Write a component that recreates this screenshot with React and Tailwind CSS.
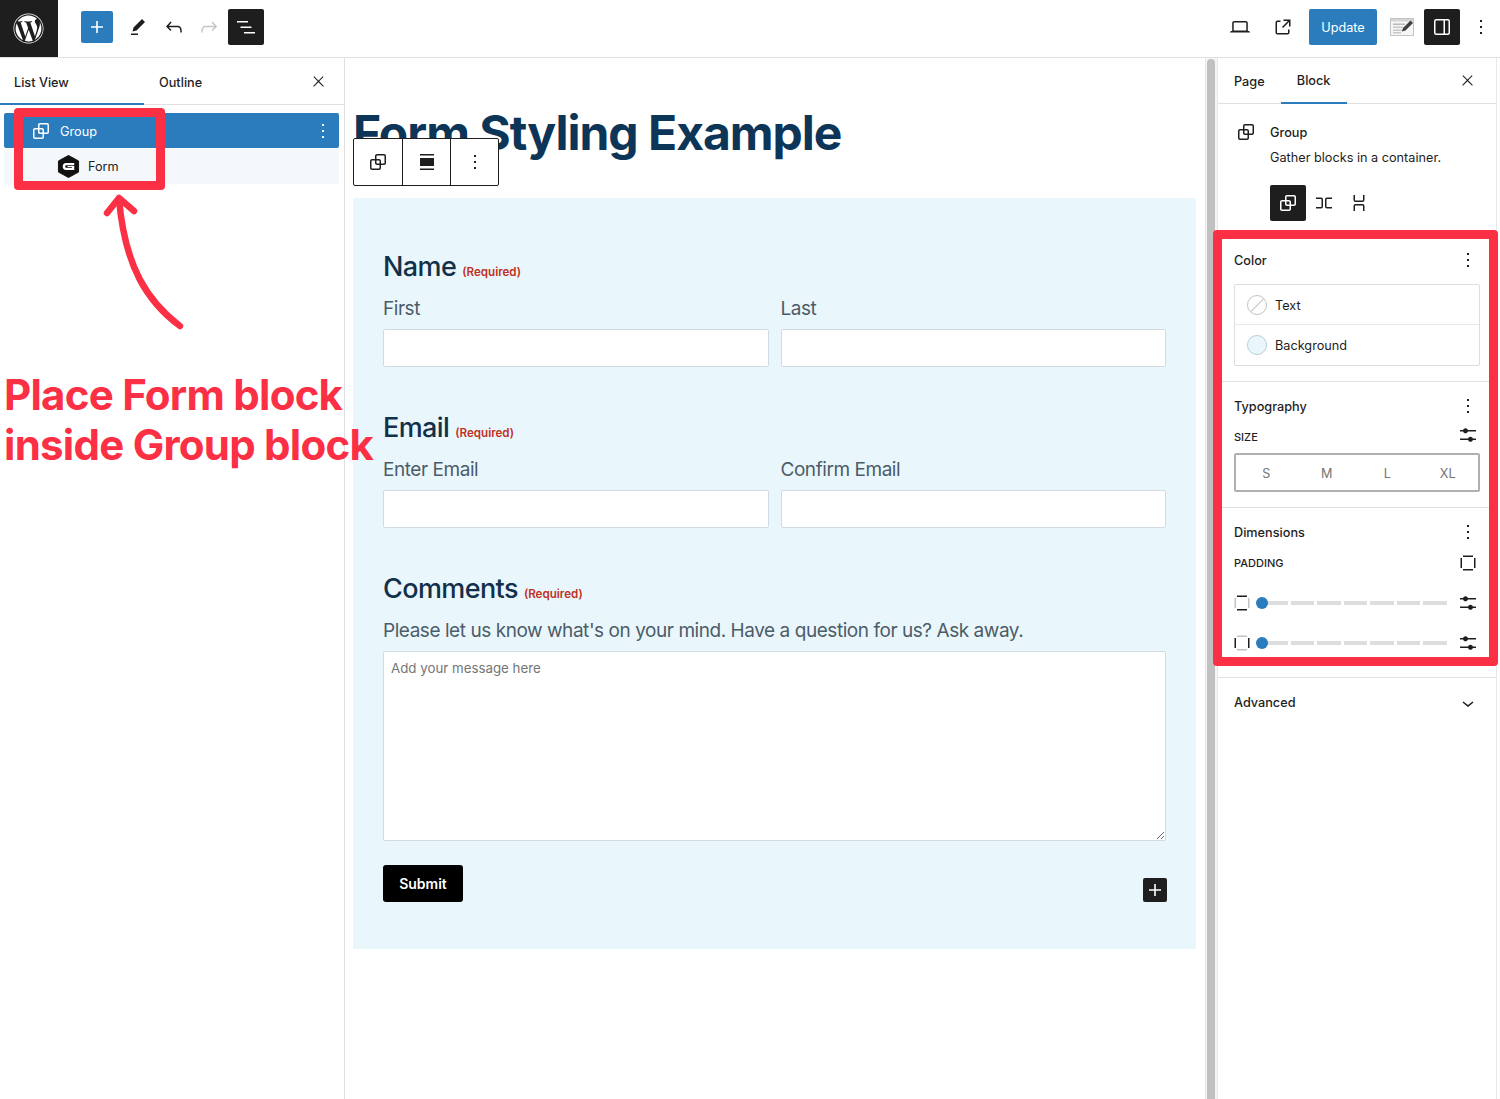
import React from 'react';
import { FaWordpress } from 'react-icons/fa';

const PATHS = {
  group: 'M18 4h-7c-1.1 0-2 .9-2 2v3H6c-1.1 0-2 .9-2 2v7c0 1.1.9 2 2 2h7c1.1 0 2-.9 2-2v-3h3c1.1 0 2-.9 2-2V6c0-1.1-.9-2-2-2zm-4.5 14c0 .3-.2.5-.5.5H6c-.3 0-.5-.2-.5-.5v-7c0-.3.2-.5.5-.5h3V13c0 1.1.9 2 2 2h2.5v3zm0-4.5H11c-.3 0-.5-.2-.5-.5v-2.5H13c.3 0 .5.2.5.5v2.5zm5-.5c0 .3-.2.5-.5.5h-3V11c0-1.1-.9-2-2-2h-2.5V6c0-.3.2-.5.5-.5h7c.3 0 .5.2.5.5v7z',
  plus: 'M18 11.2h-5.2V6h-1.6v5.2H6v1.6h5.2V18h1.6v-5.2H18z',
  pencil: 'm19 7-3-3-8.5 8.5-1 4 4-1L19 7Zm-7 11.5H5V20h7v-1.5Z',
  undo: 'M18.3 11.7c-.6-.6-1.4-.9-2.3-.9H6.7l2.9-3.3-1.1-1-4.5 5L8.5 16l1-1-2.7-2.7H16c.5 0 .9.2 1.3.5 1 1 1 3.4 1 4.5v.3h1.5v-.2c0-1.5 0-4.3-1.5-5.7z',
  redo: 'M15.6 6.5l-1.1 1 2.9 3.3H8c-.9 0-1.7.3-2.3.9-1.4 1.5-1.4 4.2-1.4 5.6v.2h1.5v-.3c0-1.1 0-3.5 1-4.5.3-.3.7-.5 1.3-.5h9.2L14.5 15l1.1 1.1 4.6-4.6-4.6-5z',
  listView: 'M3 6h11v1.5H3V6Zm3.5 5.5h11V13h-11v-1.5ZM21 17H10v1.5h11V17Z',
  close: 'M13 11.8l6.1-6.3-1-1-6.1 6.2-6.1-6.2-1 1 6.1 6.3-6.5 6.7 1 1 6.5-6.6 6.5 6.6 1-1z',
  more: 'M13 19h-2v-2h2v2zm0-6h-2v-2h2v2zm0-6h-2V5h2v2z',
  laptop: 'M20.5 16h-.7V8c0-1.1-.9-2-2-2H6.2c-1.1 0-2 .9-2 2v8h-.7c-.8 0-1.5.7-1.5 1.5h20c0-.8-.7-1.5-1.5-1.5zM5.7 8c0-.3.2-.5.5-.5h11.6c.3 0 .5.2.5.5v7.6H5.7V8z',
  external: 'M19.5 4.5h-7V6h4.44l-5.97 5.97 1.06 1.06L18 7.06v4.44h1.5v-7Zm-13 1a2 2 0 0 0-2 2v10a2 2 0 0 0 2 2h10a2 2 0 0 0 2-2v-3H17v3a.5.5 0 0 1-.5.5h-10a.5.5 0 0 1-.5-.5v-10a.5.5 0 0 1 .5-.5h3V5.5h-3Z',
  row: 'M4 6.5h5a2 2 0 0 1 2 2v7a2 2 0 0 1-2 2H4V16h5a.5.5 0 0 0 .5-.5v-7A.5.5 0 0 0 9 8H4V6.5Zm16 0h-5a2 2 0 0 0-2 2v7a2 2 0 0 0 2 2h5V16h-5a.5.5 0 0 1-.5-.5v-7A.5.5 0 0 1 15 8h5V6.5Z',
  stack: 'M17.5 4v5a2 2 0 0 1-2 2h-7a2 2 0 0 1-2-2V4H8v5a.5.5 0 0 0 .5.5h7A.5.5 0 0 0 16 9V4h1.5Zm0 16v-5a2 2 0 0 0-2-2h-7a2 2 0 0 0-2 2v5H8v-5a.5.5 0 0 1 .5-.5h7a.5.5 0 0 1 .5.5v5h1.5Z',
  sliders: 'M14.5 13.8c-1.1 0-2.1.7-2.4 1.8H4V17h8.1c.3 1 1.3 1.8 2.4 1.8s2.1-.7 2.4-1.8H20v-1.5h-3.1c-.3-1-1.3-1.7-2.4-1.7zM11.9 7c-.3-1-1.3-1.8-2.4-1.8S7.4 6 7.1 7H4v1.5h3.1c.3 1 1.3 1.8 2.4 1.8s2.1-.7 2.4-1.8H20V7h-8.1z',
  chevron: 'M17.5 11.6L12 16l-5.5-4.4.9-1.2L12 14l4.5-3.6 1 1.2z',
};

const Icon = ({ name, size = 24, className = '' }) => (
  <svg viewBox="0 0 24 24" width={size} height={size} fill="currentColor" className={`shrink-0 ${className}`}>
    <path d={PATHS[name]} />
  </svg>
);

// sides: which bars of the square are drawn dark
const SidesIcon = ({ dark }) => {
  const cls = (side) => (dark.includes(side) ? '#1e1e1e' : '#c4c4c4');
  return (
    <svg viewBox="0 0 24 24" width="24" height="24" className="shrink-0">
      <rect x="7" y="4.5" width="10" height="1.5" fill={cls('top')} />
      <rect x="7" y="18" width="10" height="1.5" fill={cls('bottom')} />
      <rect x="4.5" y="7" width="1.5" height="10" fill={cls('left')} />
      <rect x="18" y="7" width="1.5" height="10" fill={cls('right')} />
    </svg>
  );
};

const FormLogo = () => (
  <svg viewBox="0 0 24 24" width="23" height="25" className="shrink-0">
    <polygon points="12,0.5 22.5,6.2 22.5,17.8 12,23.5 1.5,17.8 1.5,6.2" fill="#111" stroke="#111" strokeLinejoin="round" />
    <path d="M6 12c0-2.2 1.2-3.6 3.4-3.6h8.6v2.3H9.8c-.8 0-1.2.4-1.2 1.3s.4 1.3 1.2 1.3h5.8v-.7H11v-1.1h7v4.1H9.4C7.2 15.6 6 14.2 6 12Z" fill="#fff" />
  </svg>
);

const PreviewIcon = () => (
  <svg viewBox="0 0 24 20" width="24" height="20" className="shrink-0">
    <rect x="0.5" y="1.5" width="23" height="17" fill="#f6f6f6" stroke="#c4c4c4" />
    <rect x="1" y="2" width="22" height="2.5" fill="#d4d4d4" />
    <rect x="3" y="6.5" width="12" height="1.5" fill="#b8b8b8" />
    <rect x="3" y="9.5" width="10" height="1.5" fill="#c8c8c8" />
    <rect x="3" y="12.5" width="11" height="1.5" fill="#c8c8c8" />
    <rect x="3" y="15" width="8" height="1.5" fill="#c8c8c8" />
    <path d="M20.5 3.5l2.5 2.5-7.5 7.5-3.5 1 1-3.5z" fill="#3f3f3f" />
  </svg>
);

const SectionHead = ({ title }) => (
  <div className="flex h-6 items-center justify-between">
    <span className="text-[12.7px] font-medium text-[#1e1e1e]">{title}</span>
    <Icon name="more" className="mb-[2px] text-[#1e1e1e]" />
  </div>
);

const SizeLabel = ({ children, icon }) => (
  <div className="mt-[10px] flex h-4 items-center justify-between">
    <span className="text-[11px] font-medium uppercase text-[#1e1e1e]">{children}</span>
    {icon}
  </div>
);

const SliderRow = ({ dark, className }) => (
  <div className={`flex h-6 items-center ${className}`}>
    <div className="-ml-1 w-6">
      <SidesIcon dark={dark} />
    </div>
    <span className="-mr-1 ml-[2px] z-10 h-3 w-3 shrink-0 rounded-full bg-[#2a7cbd]" />
    <div className="flex w-[183px] gap-[3px]">
      <span className="h-1 w-[24px] bg-[#dddddd]" />
      <span className="h-1 w-[24px] bg-[#dddddd]" />
      <span className="h-1 w-[24px] bg-[#dddddd]" />
      <span className="h-1 w-[24px] bg-[#dddddd]" />
      <span className="h-1 w-[24px] bg-[#dddddd]" />
      <span className="h-1 w-[24px] bg-[#dddddd]" />
      <span className="h-1 w-[24px] bg-[#dddddd]" />
    </div>
    <Icon name="sliders" className="ml-[9px] text-[#1e1e1e]" />
  </div>
);

const FieldHeading = ({ children, className = '' }) => (
  <div className={`flex h-9 items-baseline gap-[6px] pt-px ${className}`}>
    <span className="text-[27px] font-medium leading-9 tracking-[-0.6px] text-[#12304a]">{children}</span>
    <span className="text-[11.6px] font-semibold text-[#c0301f]">(Required)</span>
  </div>
);

const Label = ({ children }) => (
  <div className="mt-[11px] h-7 text-[19px] leading-7 tracking-[-0.45px] text-[#4d5c69]">{children}</div>
);

const TextBox = () => (
  <input type="text" readOnly className="h-[38px] w-full rounded-[2px] border border-[#d3dbe2] bg-white" />
);

const TwoFields = ({ a, b }) => (
  <div className="grid grid-cols-2 gap-3">
    <div>
      <Label>{a}</Label>
      <div className="mt-[6px]">
        <TextBox />
      </div>
    </div>
    <div>
      <Label>{b}</Label>
      <div className="mt-[6px]">
        <TextBox />
      </div>
    </div>
  </div>
);

export default function App() {
  return (
    <div className="relative flex h-[1099px] w-[1500px] flex-col overflow-hidden bg-white font-['Inter',sans-serif] text-[#1e1e1e]">
      {/* top bar */}
      <header className="flex h-[58px] shrink-0 items-start border-b border-[#e0e0e0]">
        <div className="flex h-[57px] w-[58px] items-center justify-center bg-[#1e1e1e] pr-[2px] text-white">
          <FaWordpress size={31} />
        </div>
        <div className="ml-[23px] mt-[11px] flex h-8 w-8 items-center justify-center rounded-[2px] bg-[#2a7cbd] text-white">
          <Icon name="plus" />
        </div>
        <Icon name="pencil" className="ml-[13px] mt-[15px]" />
        <Icon name="undo" className="ml-3 mt-[15px]" />
        <Icon name="redo" className="ml-[11px] mt-[15px] text-[#c7c7c7]" />
        <div className="ml-[7px] mt-[9px] flex h-9 w-9 items-center justify-center rounded-[2px] bg-[#1e1e1e] text-white">
          <Icon name="listView" />
        </div>
        <div className="ml-auto mt-[15px]">
          <Icon name="laptop" />
        </div>
        <Icon name="external" className="ml-[19px] mt-[15px]" />
        <div className="ml-[14px] mt-[9px] flex h-9 w-[68px] items-center justify-center rounded-[2px] bg-[#2a7cbd] pt-px text-[12.7px] text-white">
          Update
        </div>
        <div className="ml-[13px] mt-[17px]">
          <PreviewIcon />
        </div>
        <div className="ml-[10px] mt-[9px] flex h-9 w-9 items-center justify-center rounded-[2px] bg-[#1e1e1e] text-white">
          <svg viewBox="0 0 24 24" width="24" height="24" className="shrink-0">
            <rect x="4.75" y="4.75" width="14.5" height="14.5" rx="1.5" fill="none" stroke="currentColor" strokeWidth="1.5" />
            <rect x="13.5" y="4.75" width="1.5" height="14.5" fill="currentColor" />
          </svg>
        </div>
        <Icon name="more" className="ml-[9px] mr-[7px] mt-[15px]" />
      </header>

      <div className="flex min-h-0 flex-1">
        {/* list view */}
        <aside className="w-[345px] shrink-0 border-r border-[#e0e0e0]">
          <div className="flex h-[47px] items-center border-b border-[#e0e0e0] pt-[1px] text-[12.7px] font-medium">
            <div className="flex h-[46px] w-[144px] items-center border-b-2 border-[#2a7cbd] pl-[14px] pt-1">
              List View
            </div>
            <span className="ml-[15px] mt-[2px]">Outline</span>
            <Icon name="close" size={17} className="ml-auto mr-[17px]" />
          </div>
          <div className="ml-1 mr-[5px] mt-2">
            <div className="flex h-[35px] items-center rounded-[2px] bg-[#2a7cbd] pl-[25px] text-white">
              <Icon name="group" />
              <span className="ml-[7px] mt-[2px] text-[12.7px]">Group</span>
              <Icon name="more" className="ml-auto mr-[4px]" />
            </div>
            <div className="mt-[1px] flex h-[35px] items-center bg-[#f4f8fb] pl-[53px]">
              <FormLogo />
              <span className="ml-2 text-[12.7px]">Form</span>
            </div>
          </div>
        </aside>

        {/* editor canvas */}
        <main className="relative w-[860px] shrink-0 pl-2 pr-[9px]">
          <h1 className="pt-[46px] text-[48px] font-bold leading-[58px] tracking-[-1px] text-[#0d3558]">
            Form Styling Example
          </h1>
          <section className="mt-[36px] h-[751px] bg-[#e9f7fc] px-[30px] pt-[50px]">
            <FieldHeading>Name</FieldHeading>
            <TwoFields a="First" b="Last" />
            <FieldHeading className="mt-[42px]">Email</FieldHeading>
            <TwoFields a="Enter Email" b="Confirm Email" />
            <FieldHeading className="mt-[42px]">Comments</FieldHeading>
            <Label>Please let us know what's on your mind. Have a question for us? Ask away.</Label>
            <textarea
              readOnly
              placeholder="Add your message here"
              className="mt-[6px] block h-[190px] w-full rounded-[2px] border border-[#d3dbe2] bg-white px-[7px] py-[6px] text-[13.3px] leading-5 placeholder:text-[#757575]"
            />
            <div className="mt-6 flex items-end justify-between">
              <div className="flex h-[37px] w-20 items-center justify-center rounded-[3px] bg-black text-[14px] font-semibold text-white">
                Submit
              </div>
              <div className="-mr-px flex h-6 w-6 items-center justify-center rounded-[2px] bg-[#1e1e1e] text-white">
                <Icon name="plus" />
              </div>
            </div>
          </section>

          {/* floating block toolbar */}
          <div className="absolute left-2 top-[80px] flex h-[48px] w-[146px] rounded-[2px] border border-[#1e1e1e] bg-white">
            <div className="flex w-[49px] items-center justify-center border-r border-[#1e1e1e]">
              <Icon name="group" />
            </div>
            <div className="flex w-[48px] items-center justify-center border-r border-[#1e1e1e]">
              <svg viewBox="0 0 24 24" width="24" height="24">
                <rect x="5" y="4" width="14" height="1.5" fill="currentColor" />
                <rect x="5" y="8" width="14" height="8" fill="currentColor" />
                <rect x="5" y="18.5" width="14" height="1.5" fill="currentColor" />
              </svg>
            </div>
            <div className="flex flex-1 items-center justify-center">
              <Icon name="more" />
            </div>
          </div>
        </main>

        {/* scrollbar */}
        <div className="w-[13px] shrink-0 border-l border-r border-[#e8e8e8] bg-[#f4f4f4] px-px pt-px">
          <div className="h-full w-2 rounded-t-[4px] bg-[#c1c1c1]" />
        </div>

        {/* settings sidebar */}
        <aside className="w-[279px] shrink-0 border-r border-[#e8e8e8]">
          <div className="flex h-[46px] items-center border-b border-[#e0e0e0] pl-4 text-[12.7px] font-medium">
            <span className="mt-[2px]">Page</span>
            <div className="ml-[16px] flex h-[46px] w-[66px] items-center justify-center border-b-2 border-[#2a7cbd] pt-[2px]">
              Block
            </div>
            <Icon name="close" size={17} className="ml-auto mr-[20px] -mt-[1px]" />
          </div>

          <div className="h-[134px] pl-4 pt-[16px]">
            <div className="flex">
              <Icon name="group" />
              <div className="ml-3">
                <div className="h-6 pt-px text-[12.7px] font-medium leading-6">Group</div>
                <div className="mt-[1px] h-6 pt-px text-[12.7px] leading-6">Gather blocks in a container.</div>
              </div>
            </div>
            <div className="ml-[36px] mt-[16px] flex items-center">
              <div className="flex h-9 w-9 items-center justify-center rounded-[2px] bg-[#1e1e1e] text-white">
                <Icon name="group" />
              </div>
              <div className="flex h-9 w-9 items-center justify-center">
                <Icon name="row" />
              </div>
              <div className="-ml-px flex h-9 w-9 items-center justify-center">
                <Icon name="stack" />
              </div>
            </div>
          </div>

          <div className="h-[144px] border-b border-[#e0e0e0] px-4 pt-[11px]">
            <SectionHead title="Color" />
            <div className="mt-[11px] h-[82px] rounded-[2px] border border-[#dddddd]">
              <div className="flex h-10 items-center border-b border-[#e8e8e8] pl-3">
                <span className="relative h-5 w-5 overflow-hidden rounded-full border border-[#c4c4c4] bg-white">
                  <span className="absolute left-[-3px] top-[8px] h-px w-[26px] -rotate-45 bg-[#c4c4c4]" />
                </span>
                <span className="ml-2 mt-[2px] text-[12.7px]">Text</span>
              </div>
              <div className="flex h-10 items-center pl-3">
                <span className="h-5 w-5 rounded-full border border-[#b9cdd4] bg-[#e9f7fc]" />
                <span className="ml-2 mt-[2px] text-[12.7px]">Background</span>
              </div>
            </div>
          </div>

          <div className="h-[126px] border-b border-[#e0e0e0] px-4 pt-[13px]">
            <SectionHead title="Typography" />
            <SizeLabel icon={<Icon name="sliders" className="mb-1" />}>Size</SizeLabel>
            <div className="mt-2 grid h-[39px] grid-cols-4 items-center rounded-[2px] border-2 border-[#b0b0b0] pt-[2px] text-center text-[12.7px] text-[#757575]">
              <span>S</span>
              <span>M</span>
              <span>L</span>
              <span>XL</span>
            </div>
          </div>

          <div className="h-[170px] border-b border-[#e0e0e0] px-4 pt-[13px]">
            <SectionHead title="Dimensions" />
            <SizeLabel icon={<SidesIcon dark={['top', 'bottom', 'left', 'right']} />}>Padding</SizeLabel>
            <SliderRow dark={['top', 'bottom']} className="mt-5" />
            <SliderRow dark={['left', 'right']} className="mt-[16px]" />
          </div>

          <div className="flex h-[50px] items-center justify-between px-4">
            <span className="text-[12.7px] font-medium">Advanced</span>
            <Icon name="chevron" />
          </div>
        </aside>
      </div>

      {/* tutorial annotations over the screenshot */}
      <div className="absolute left-[14px] top-[108px] h-[82px] w-[151px] rounded-[4px] border-[9px] border-[#fb3045]" />
      <div className="absolute left-[1213px] top-[230px] h-[436px] w-[285px] rounded-[4px] border-[9px] border-[#fb3045]" />
      <svg className="absolute left-0 top-0" width="200" height="340" fill="none" stroke="#fb3045" strokeWidth="6.5" strokeLinecap="round" strokeLinejoin="round">
        <path d="M180 326 C148 302 125 268 119 199" />
        <path d="M107 213 L119 198 L134 211" />
      </svg>
      <div className="absolute left-[4px] top-[370px] text-[42px] font-bold leading-[50px] tracking-[-0.75px] text-[#fb3045]">
        <div>Place Form block</div>
        <div>inside Group block</div>
      </div>
    </div>
  );
}
